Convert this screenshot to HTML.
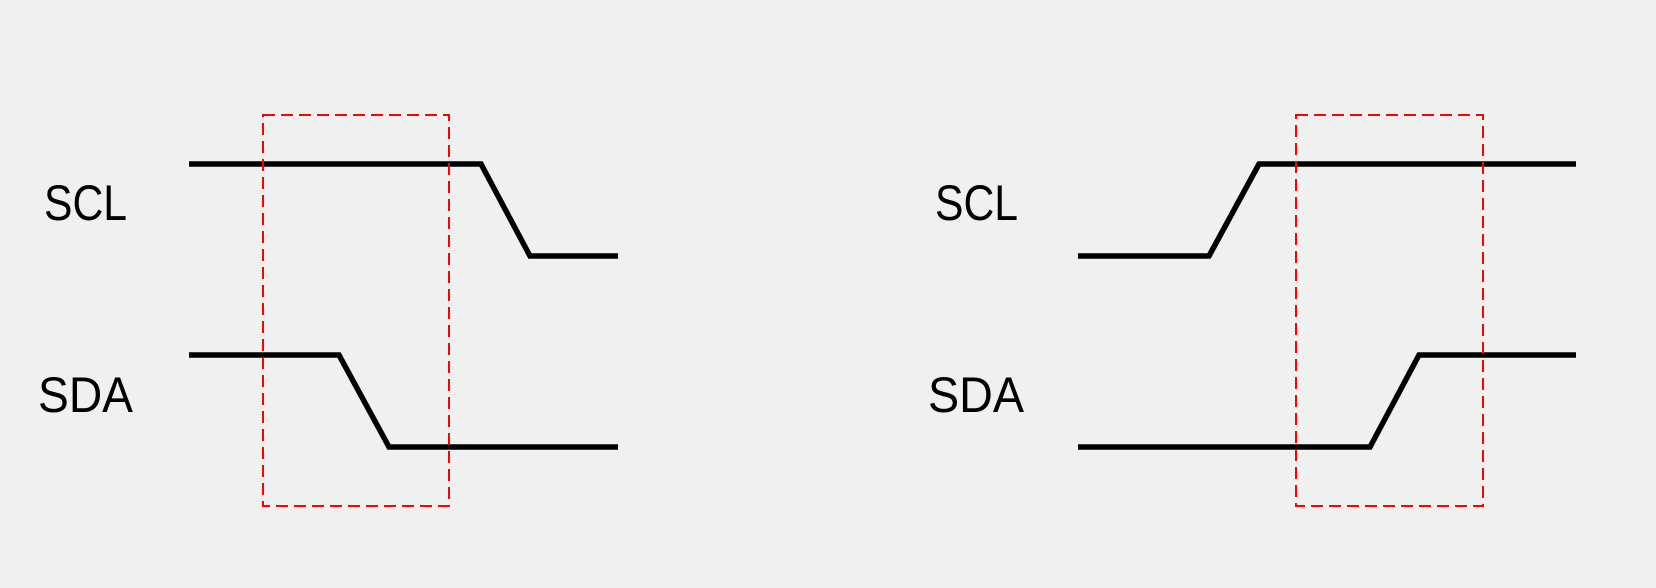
<!DOCTYPE html>
<html><head><meta charset="utf-8"><style>
html,body{margin:0;padding:0;background:#f0f0f0;}
svg{display:block}
</style></head><body>
<svg width="1656" height="588" viewBox="0 0 1656 588" xmlns="http://www.w3.org/2000/svg">
<rect width="1656" height="588" fill="#f0f0f0"/>
<g fill="none" stroke="#000" stroke-width="5.5" stroke-linejoin="miter">
<polyline points="189,164 481,164 530,256 618,256"/>
<polyline points="189,355 339,355 389,447 618,447"/>
<polyline points="1078,256 1209,256 1259,164 1576,164"/>
<polyline points="1078,447 1370,447 1419,355 1576,355"/>
</g>
<g fill="none" stroke="#ff0000" stroke-width="2" stroke-dasharray="12,6">
<rect x="263" y="115" width="186" height="391"/>
<rect x="1296" y="115" width="187" height="391"/>
</g>
<g font-family="'Liberation Sans', sans-serif" font-size="50" fill="#000">
<text x="44" y="220" textLength="83" lengthAdjust="spacingAndGlyphs">SCL</text>
<text x="38" y="412" textLength="95" lengthAdjust="spacingAndGlyphs">SDA</text>
<text x="935" y="220" textLength="83" lengthAdjust="spacingAndGlyphs">SCL</text>
<text x="928" y="412" textLength="96" lengthAdjust="spacingAndGlyphs">SDA</text>
</g>
</svg>
</body></html>
